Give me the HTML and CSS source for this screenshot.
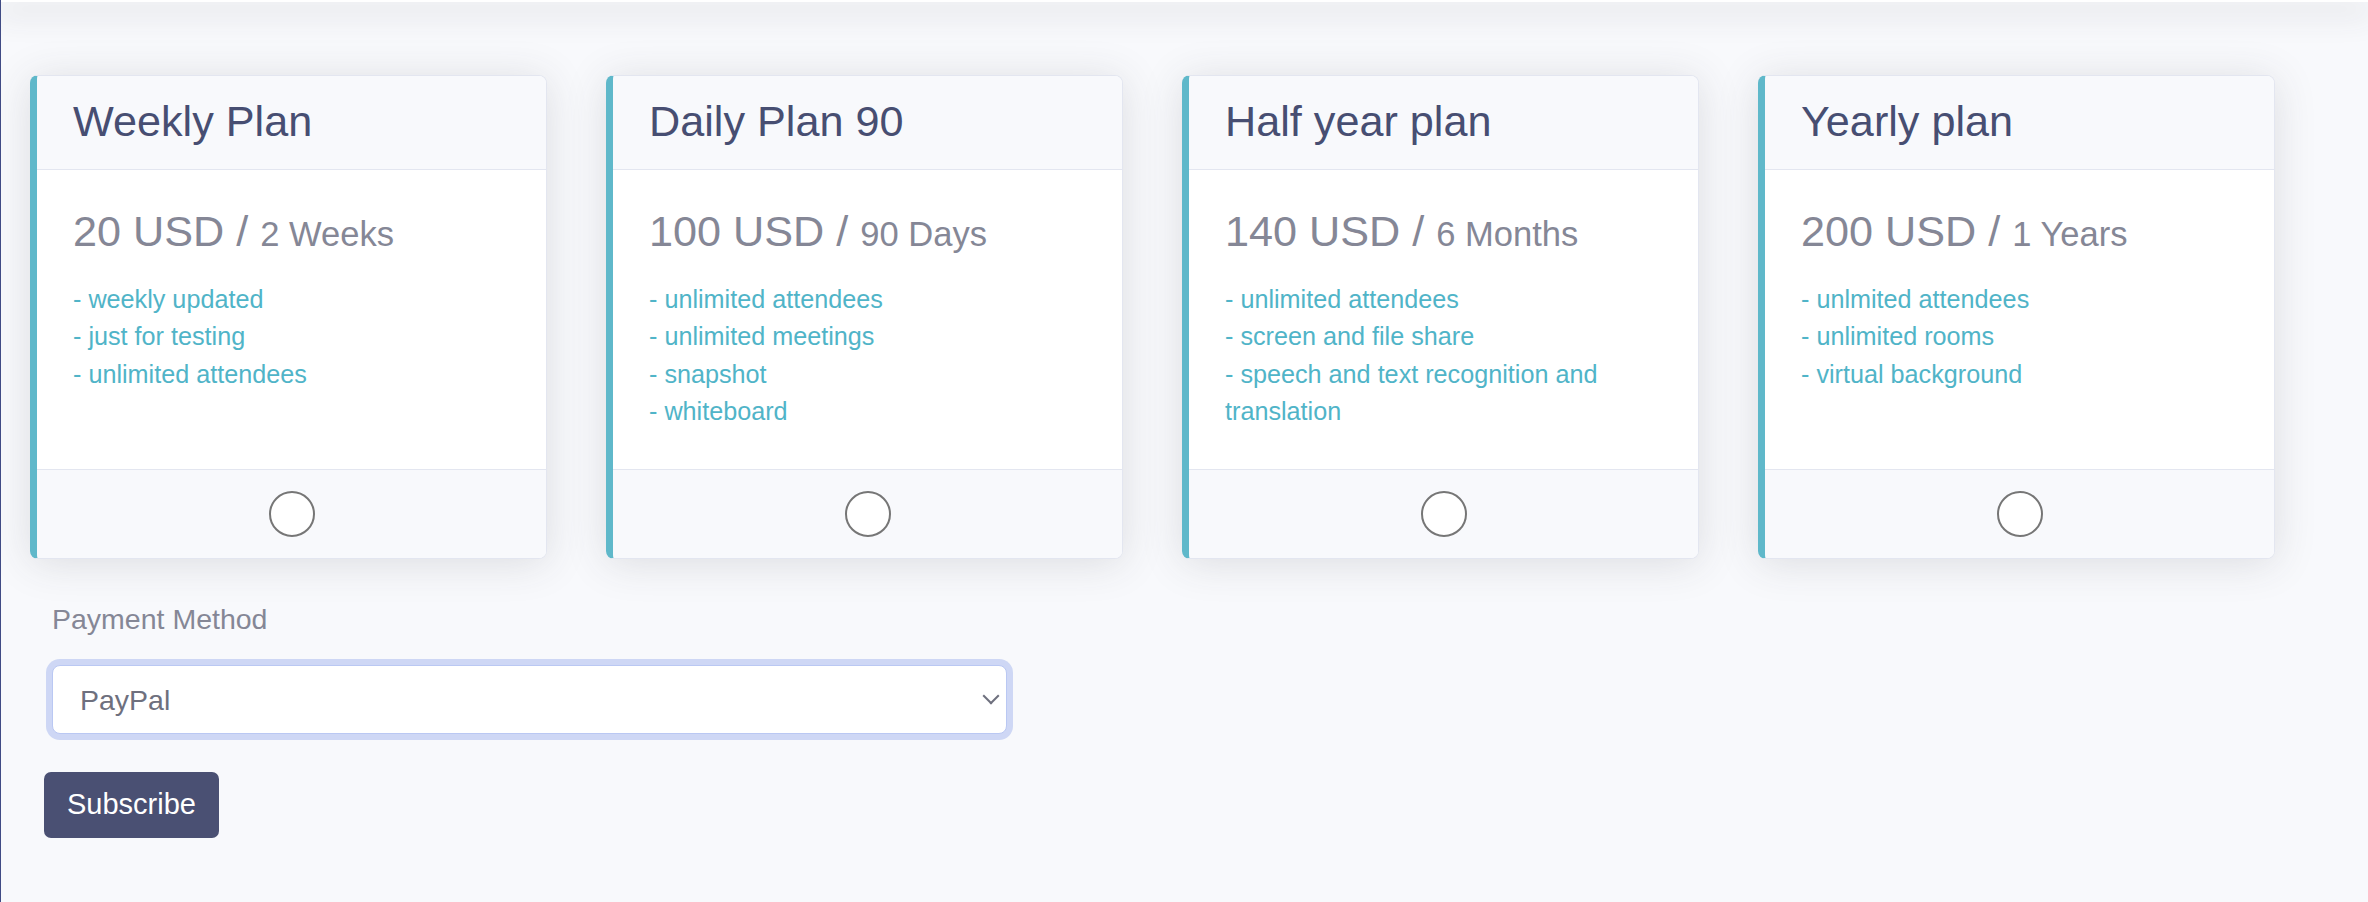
FILE: index.html
```html
<!DOCTYPE html>
<html lang="en">
<head>
  <meta charset="UTF-8">
  <title>Subscription Plans</title>
  <meta name="viewport" content="width=device-width, initial-scale=1.0">
  <link rel="stylesheet" href="styles.css">
</head>
<body>
  <!-- Top bar edge (navbar scrolled away) -->
  <div class="topbar"></div>

  <main class="page">
    <!-- Plan Cards -->
    <div class="plans">
      <div class="plan-card">
        <div class="plan-header"><h3 class="plan-title">Weekly Plan</h3></div>
        <div class="plan-body">
          <h3 class="plan-price">20 USD / <small>2 Weeks</small></h3>
          <div class="plan-features">
            <div>- weekly updated</div>
            <div>- just for testing</div>
            <div>- unlimited attendees</div>
          </div>
        </div>
        <div class="plan-footer"><input type="radio" name="plan" class="plan-radio" value="1"></div>
      </div>

      <div class="plan-card">
        <div class="plan-header"><h3 class="plan-title">Daily Plan 90</h3></div>
        <div class="plan-body">
          <h3 class="plan-price">100 USD / <small>90 Days</small></h3>
          <div class="plan-features">
            <div>- unlimited attendees</div>
            <div>- unlimited meetings</div>
            <div>- snapshot</div>
            <div>- whiteboard</div>
          </div>
        </div>
        <div class="plan-footer"><input type="radio" name="plan" class="plan-radio" value="2"></div>
      </div>

      <div class="plan-card">
        <div class="plan-header"><h3 class="plan-title">Half year plan</h3></div>
        <div class="plan-body">
          <h3 class="plan-price">140 USD / <small>6 Months</small></h3>
          <div class="plan-features">
            <div>- unlimited attendees</div>
            <div>- screen and file share</div>
            <div>- speech and text recognition and translation</div>
          </div>
        </div>
        <div class="plan-footer"><input type="radio" name="plan" class="plan-radio" value="3"></div>
      </div>

      <div class="plan-card">
        <div class="plan-header"><h3 class="plan-title">Yearly plan</h3></div>
        <div class="plan-body">
          <h3 class="plan-price">200 USD / <small>1 Years</small></h3>
          <div class="plan-features">
            <div>- unlmited attendees</div>
            <div>- unlimited rooms</div>
            <div>- virtual background</div>
          </div>
        </div>
        <div class="plan-footer"><input type="radio" name="plan" class="plan-radio" value="4"></div>
      </div>
    </div>

    <!-- Payment Form -->
    <form class="subscribe-form" onsubmit="return false;">
      <div class="form-group">
        <label for="paymentMethod" class="form-label">Payment Method</label>
        <div class="select-wrap">
          <select id="paymentMethod" class="form-select">
            <option>PayPal</option>
          </select>
        </div>
      </div>
      <button type="submit" class="btn-subscribe">Subscribe</button>
    </form>
  </main>
</body>
</html>
```

FILE: styles.css
```css
/* Base Styles */
html, body {
  height: 100%;
}
body {
  margin: 0;
  font-family: "Liberation Sans", Arial, sans-serif;
  background-color: #f8f9fc; /* Light page background */
  border-left: 1px solid #404b85; /* Sidebar edge */
  box-sizing: border-box;
}
.topbar {
  height: 2px;
  background-color: #ffffff;
  box-shadow: 0 8px 30px 6px rgba(58, 59, 69, 0.12);
}
.page {
  padding: 73px 29px 0;
}

/* Plan Cards */
.plans {
  display: grid;
  grid-template-columns: repeat(4, 517px);
  column-gap: 59px;
}
.plan-card {
  display: flex;
  flex-direction: column;
  background-color: #ffffff;
  border: 1px solid #e3e6f0;
  border-left: 7px solid #5fb8ca; /* Teal accent */
  border-radius: 8px;
  box-shadow: 0 4px 42px rgba(58, 59, 69, 0.15);
  overflow: hidden;
}
.plan-header {
  padding: 19px 36px 21px;
  background-color: #f8f9fc;
  border-bottom: 1px solid #e3e6f0;
}
.plan-title {
  margin: 0;
  font-size: 43.2px;
  font-weight: 400;
  line-height: 53px;
  color: #474e72;
}
.plan-body {
  flex: 1;
  padding: 35px 36px 38.5px;
}
.plan-price {
  margin: 0 0 19.5px;
  font-size: 43.2px;
  font-weight: 400;
  line-height: 53px;
  color: #858796;
}
.plan-price small {
  font-size: 80%;
}
.plan-features {
  font-size: 25.2px;
  line-height: 37.5px;
  color: #50b4c8;
}
.plan-footer {
  display: flex;
  justify-content: center;
  padding: 21px 0;
  background-color: #f8f9fc;
  border-top: 1px solid #e3e6f0;
}
.plan-radio {
  appearance: none;
  width: 46px;
  height: 46px;
  margin: 0;
  border: 2px solid #767676;
  border-radius: 50%;
  background-color: #ffffff;
  cursor: pointer;
}
.plan-radio:checked {
  border-color: #4e73df;
  box-shadow: inset 0 0 0 10px #4e73df;
}

/* Payment Form */
.subscribe-form {
  padding-top: 38.5px;
}
.form-group {
  margin-left: 22px;
  margin-bottom: 37.5px;
}
.form-label {
  display: block;
  margin-bottom: 25px;
  font-size: 28.5px;
  line-height: 1.5;
  color: #858796;
}
.select-wrap {
  position: relative;
  width: 955px;
}
.select-wrap::after {
  content: "";
  position: absolute;
  right: 10px;
  top: calc(50% - 10px);
  width: 12px;
  height: 12px;
  box-sizing: border-box;
  border-right: 2px solid #6e707e;
  border-bottom: 2px solid #6e707e;
  transform: rotate(45deg);
  pointer-events: none;
}
.form-select {
  appearance: none;
  display: block;
  width: 100%;
  height: 69px;
  padding: 0 40px 0 27px;
  font-family: inherit;
  font-size: 28.5px;
  color: #6e707e;
  background-color: #ffffff;
  border: 1px solid #bac8f3; /* Focus border */
  border-radius: 8px;
  box-shadow: 0 0 0 6px rgba(78, 115, 223, 0.25); /* Focus ring */
  outline: none;
}

/* Button Styles */
.btn-subscribe {
  display: block;
  margin-left: 14px;
  height: 66px;
  padding: 0 23px;
  font-family: inherit;
  font-size: 29px;
  color: #ffffff;
  background-color: #4a5073;
  border: none;
  border-radius: 7px;
  cursor: pointer;
}
.btn-subscribe:hover {
  background-color: #3f4563;
}
```
